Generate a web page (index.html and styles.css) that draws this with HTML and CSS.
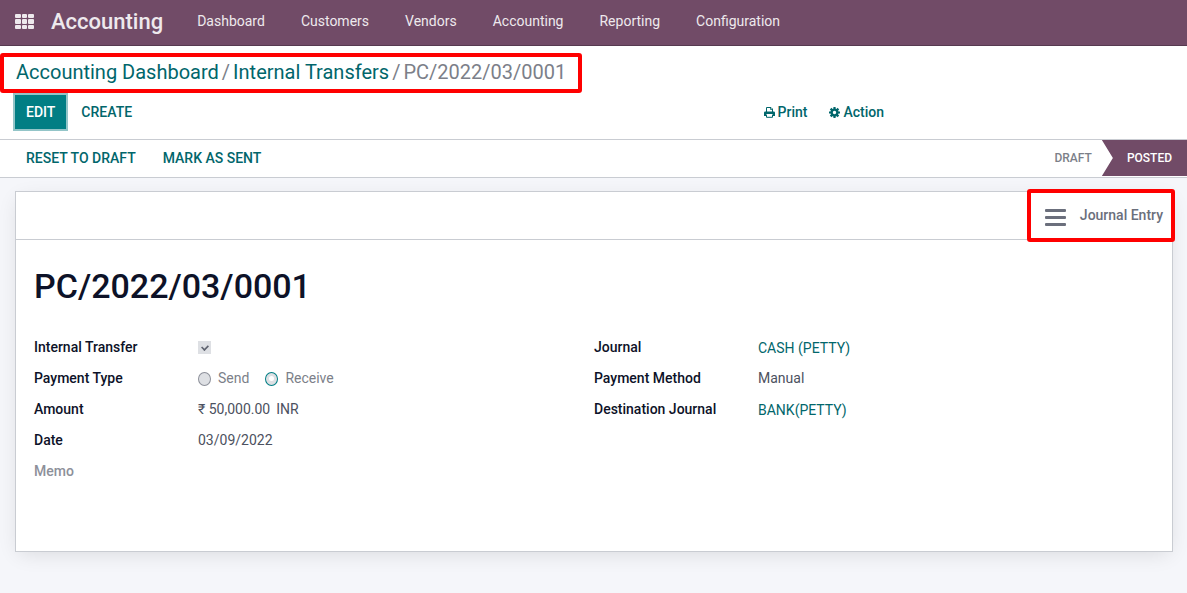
FILE: index.html
```html
<!DOCTYPE html>
<html lang="en">
<head>
<meta charset="utf-8">
<meta name="viewport" content="width=device-width, initial-scale=1">
<title>PC/2022/03/0001 - Accounting</title>
<link rel="stylesheet" href="styles.css">
</head>
<body>
<header class="navbar">
  <button class="apps" type="button" aria-label="Apps">
    <svg width="20" height="16" viewBox="0 0 20 16" fill="currentColor">
      <rect x="0" y="0" width="6" height="4" rx="1"/><rect x="7" y="0" width="5" height="4" rx="1"/><rect x="13" y="0" width="6" height="4" rx="1"/>
      <rect x="0" y="5" width="6" height="5" rx="1"/><rect x="7" y="5" width="5" height="5" rx="1"/><rect x="13" y="5" width="6" height="5" rx="1"/>
      <rect x="0" y="11" width="6" height="4" rx="1"/><rect x="7" y="11" width="5" height="4" rx="1"/><rect x="13" y="11" width="6" height="4" rx="1"/>
    </svg>
  </button>
  <a class="brand" href="#">Accounting</a>
  <nav class="menu">
    <a href="#">Dashboard</a>
    <a href="#">Customers</a>
    <a href="#">Vendors</a>
    <a href="#">Accounting</a>
    <a href="#">Reporting</a>
    <a href="#">Configuration</a>
  </nav>
</header>

<section class="control-panel">
  <nav class="breadcrumb marked" aria-label="Breadcrumb">
    <a href="#">Accounting Dashboard</a><span>/</span><a href="#">Internal Transfers</a><span>/</span><span>PC/2022/03/0001</span>
  </nav>
  <div class="toolbar">
    <div class="toolbar-left">
      <button class="btn btn-primary" type="button">EDIT</button>
      <button class="btn" type="button">CREATE</button>
    </div>
    <div class="toolbar-right">
      <button class="tool" type="button">
        <svg width="11" height="11" viewBox="0 0 11 11" aria-hidden="true">
          <path d="M2.500 5V.5H7L8.500 2V5" fill="none" stroke="currentColor"/>
          <path d="M6.500 .5V2.500H8.500" fill="none" stroke="currentColor" stroke-width=".8"/>
          <path d="M1.300 4.500H9.700Q11 4.500 11 5.800V9H9V7H2V9H0V5.800Q0 4.500 1.300 4.500Z" fill="currentColor"/>
          <path d="M2.500 7.500V10.300H8.500V7.500" fill="none" stroke="currentColor"/>
        </svg>
        Print
      </button>
      <button class="tool" type="button">
        <svg width="11" height="11" viewBox="0 0 11 11" aria-hidden="true">
          <g stroke="currentColor" stroke-width="2.200"><path d="M5.500 0V3M5.500 8V11M0 5.500H3M8 5.500H11M1.600 1.600L3.700 3.700M7.300 7.300L9.400 9.400M9.400 1.600L7.300 3.700M3.700 7.300L1.600 9.400"/></g>
          <circle cx="5.500" cy="5.500" r="2.900" fill="none" stroke="currentColor" stroke-width="2.400"/>
        </svg>
        Action
      </button>
    </div>
  </div>
</section>

<section class="statusbar">
  <div class="status-actions">
    <button class="btn" type="button">RESET TO DRAFT</button>
    <button class="btn" type="button">MARK AS SENT</button>
  </div>
  <div class="stages">
    <span class="stage">DRAFT</span>
    <span class="stage stage-current">POSTED</span>
  </div>
</section>

<main class="content">
  <article class="sheet">
    <div class="button-box">
      <button class="stat marked" type="button">
        <svg width="22" height="20" viewBox="0 0 22 20" fill="currentColor" aria-hidden="true">
          <rect x="0" y="3" width="21" height="3" rx="1"/><rect x="0" y="10" width="21" height="3" rx="1"/><rect x="0" y="17" width="21" height="3" rx="1"/>
        </svg>
        Journal Entry
      </button>
    </div>
    <h1 class="title">PC/2022/03/0001</h1>
    <div class="groups">
      <div class="group">
        <label class="label" for="internal">Internal Transfer</label>
        <div class="value"><input class="check" type="checkbox" id="internal" checked disabled></div>
        <span class="label" id="ptype">Payment Type</span>
        <div class="value radios" role="radiogroup" aria-labelledby="ptype">
          <input class="radio" type="radio" name="ptype" id="send" disabled><label for="send">Send</label>
          <input class="radio" type="radio" name="ptype" id="receive" checked disabled><label for="receive">Receive</label>
        </div>
        <span class="label">Amount</span>
        <div class="value amount"><span>₹ 50,000.00</span><span>INR</span></div>
        <span class="label">Date</span>
        <div class="value">03/09/2022</div>
        <span class="label label-empty">Memo</span>
        <div class="value"></div>
      </div>
      <div class="group">
        <span class="label">Journal</span>
        <div class="value value-link"><a href="#">CASH (PETTY)</a></div>
        <span class="label">Payment Method</span>
        <div class="value">Manual</div>
        <span class="label">Destination Journal</span>
        <div class="value value-link"><a href="#">BANK(PETTY)</a></div>
      </div>
    </div>
  </article>
</main>
</body>
</html>
```
FILE: styles.css
```css
* {
  box-sizing: border-box;
}

body {
  margin: 0;
  min-height: 100vh;
  display: flex;
  flex-direction: column;
  background: #f5f6fa;
  color: #4c5160;
  font-family: Roboto, "Noto Sans", sans-serif;
  font-size: 14px;
  line-height: 21px;
}

a {
  color: #01666b;
  text-decoration: none;
}

button {
  border: 0;
  padding: 0;
  background: none;
  font: inherit;
  font-weight: 500;
  color: #01666b;
  cursor: pointer;
}

.navbar {
  display: flex;
  align-items: center;
  height: 46px;
  padding: 0 15px 2px;
  background: #714b67;
  border-bottom: 1px solid #563a50;
}

.navbar a,
.apps {
  color: #eee9ed;
}

.apps {
  display: flex;
}

.brand {
  margin: 0 34px 0 16px;
  font-size: 22px;
  font-weight: 500;
}

.menu {
  display: flex;
  gap: 36px;
}

.control-panel {
  padding: 7px 0 9px;
  background: #fff;
  border-bottom: 1px solid #c9ccd2;
}

.marked {
  border: 4px solid #f00;
  border-radius: 3px;
}

.breadcrumb {
  display: flex;
  gap: 3px;
  width: fit-content;
  padding: 3px 12px 5px 12px;
  font-size: 20px;
  line-height: 24px;
  color: #7c7f89;
}

.toolbar {
  display: grid;
  grid-template-columns: 1fr 1fr;
  align-items: center;
  padding: 2px 0 1px;
}

.toolbar-left {
  display: flex;
  align-items: center;
  padding-left: 15px;
}

.btn {
  padding: 6px 12px;
}

.btn-primary {
  margin-right: 3px;
  padding: 7px 11px 6px;
  background: #017e84;
  color: #fff;
  box-shadow: 0 0 0 2px #93c5c8;
}

.toolbar-right {
  display: flex;
  gap: 22px;
  padding-left: 170px;
}

.tool {
  display: flex;
  align-items: center;
  gap: 3px;
}

.statusbar {
  display: flex;
  justify-content: space-between;
  height: 38px;
  background: #fff;
  border-bottom: 1px solid #c9ccd2;
}

.status-actions {
  display: flex;
  align-items: center;
  gap: 3px;
  padding-left: 14px;
}

.stages {
  display: flex;
  padding-bottom: 1px;
  font-size: 12px;
  font-weight: 500;
}

.stage {
  display: flex;
  align-items: center;
  padding: 0 10px;
  color: #7c7f89;
}

.stage-current {
  padding: 0 15px 0 25px;
  background: #714b67;
  color: #fff;
  clip-path: polygon(0 0, 100% 0, 100% 100%, 0 100%, 11px 50%);
}

.content {
  flex: 1;
  padding: 13px 14px 41px 15px;
}

.sheet {
  min-height: 361px;
  background: #fff;
  border: 1px solid #c9ccd2;
  box-shadow: 0 5px 20px -4px rgba(0, 0, 0, 0.12);
}

.button-box {
  display: flex;
  justify-content: flex-end;
  height: 48px;
  border-bottom: 1px solid #c9ccd2;
}

.stat {
  display: flex;
  align-items: center;
  gap: 13px;
  height: 53px;
  margin: -3px -3px 0 0;
  padding: 0 8px 0 14px;
  color: #6b6f7c;
}

.title {
  margin: 25px 18px 30px;
  font-size: 34px;
  font-weight: 500;
  line-height: 42px;
  color: #0d1228;
}

.groups {
  display: grid;
  grid-template-columns: 1fr 1fr;
  align-items: start;
  padding: 0 18px;
}

.group {
  display: grid;
  grid-template-columns: 164px 1fr;
  row-gap: 10px;
}

.label {
  font-weight: 500;
  color: #0d1228;
}

.label-empty {
  color: #8d909a;
}

.value {
  display: flex;
  align-items: center;
  height: 21px;
}

.value-link {
  padding-top: 2px;
}

.amount {
  gap: 6px;
}

.check,
.radio {
  appearance: none;
  display: grid;
  place-content: center;
  width: 13px;
  height: 13px;
  margin: 0;
  background: #dee0e4;
}

.check:checked::before {
  content: "";
  width: 6px;
  height: 4px;
  margin-bottom: 2px;
  border: solid #5f6370;
  border-width: 0 0 2px 2px;
  transform: rotate(-45deg) scale(0.8);
}

.radio {
  height: 14px;
  border: 1px solid #8d909a;
  border-radius: 50%;
}

.radio:checked {
  border-color: #017e84;
}

.radio:checked::before {
  content: "";
  width: 5px;
  height: 5px;
  border-radius: 50%;
  background: #fff;
}

.radios label {
  margin: 0 16px 0 7px;
  color: #7c7f89;
}
```
